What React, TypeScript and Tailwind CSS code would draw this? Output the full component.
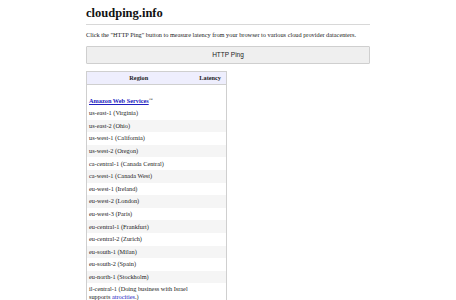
import React from "react";

const regions = [
  "us-east-1 (Virginia)",
  "us-east-2 (Ohio)",
  "us-west-1 (California)",
  "us-west-2 (Oregon)",
  "ca-central-1 (Canada Central)",
  "ca-west-1 (Canada West)",
  "eu-west-1 (Ireland)",
  "eu-west-2 (London)",
  "eu-west-3 (Paris)",
  "eu-central-1 (Frankfurt)",
  "eu-central-2 (Zurich)",
  "eu-south-1 (Milan)",
  "eu-south-2 (Spain)",
  "eu-north-1 (Stockholm)",
];

export default function App() {
  return (
    <div className="min-h-screen bg-white font-['Liberation_Serif',serif] text-[#222]">
      <div className="mx-auto w-[284px] pt-[5px]">
        <h1 className="text-[12.5px] font-bold leading-[16px] text-[#111]">cloudping.info</h1>
        <hr className="mt-[3px] border-t border-[#d8d8d8]" />
        <p className="mt-[6px] text-[6.3px] leading-[8px]">
          Click the "HTTP Ping" button to measure latency from your browser to various cloud provider datacenters.
        </p>
        <button className="mt-[7px] flex h-[18px] w-full items-center justify-center rounded-[1px] border border-[#cfcfcf] bg-[#efefef] font-['Liberation_Sans',sans-serif] text-[6.5px] text-[#222]">
          HTTP Ping
        </button>
        <table className="mt-[7px] w-[141px] border-collapse border border-[#cfcfcf] text-[6.3px] leading-[8px]">
          <thead>
            <tr className="h-[13px] border-b border-[#cfcfcf] bg-[#eeeefd]">
              <th className="w-[104px] text-center font-bold">Region</th>
              <th className="pr-[5px] text-right font-bold">Latency</th>
            </tr>
          </thead>
          <tbody>
            <tr>
              <td colSpan={2} className="px-[2px] pt-[12px] pb-[2px]">
                <a href="#" className="font-bold text-[#2020c0] underline">
                  Amazon Web Services
                </a>
                <sup className="text-[4px]">™</sup>
              </td>
            </tr>
            {regions.map((r, i) => (
              <tr key={r} className={i % 2 === 1 ? "h-[12.6px] bg-[#f5f5f5]" : "h-[12.6px] bg-white"}>
                <td className="px-[2px]">{r}</td>
                <td></td>
              </tr>
            ))}
            <tr className="bg-white">
              <td className="px-[2px] pt-[2px]">
                il-central-1 (Doing business with Israel supports{" "}
                <a href="#" className="text-[#2020c0] underline">
                  atrocities
                </a>
                .)
              </td>
              <td></td>
            </tr>
          </tbody>
        </table>
      </div>
    </div>
  );
}
